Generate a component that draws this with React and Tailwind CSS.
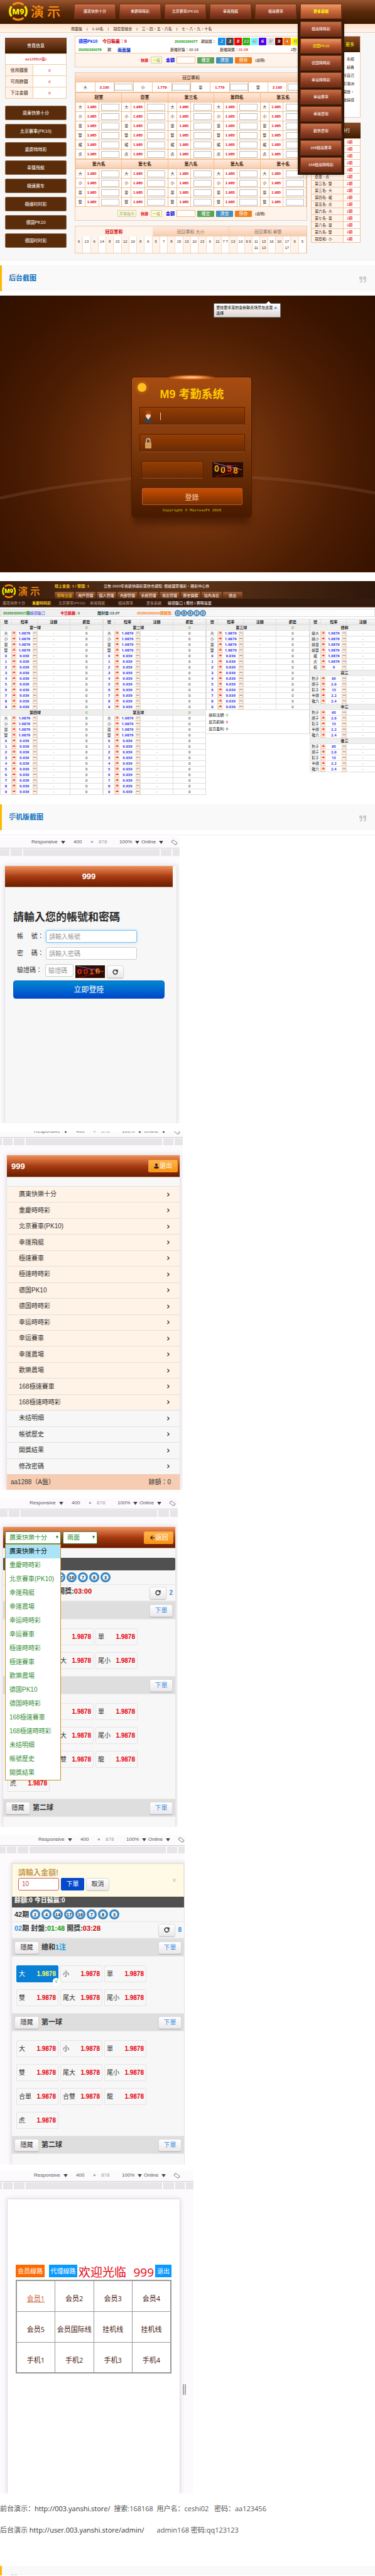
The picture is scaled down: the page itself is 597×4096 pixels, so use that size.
import React from "react";
import { FaQuoteLeft, FaQuoteRight, FaUser, FaArrowLeft, FaChevronRight } from "react-icons/fa";
import { RotateCw } from "lucide-react";

const NAV = ["廣東快樂十分", "重慶時時彩", "北京賽車(PK10)", "幸運飛艇", "極速賽車"];
const MORE = ["極速時時彩", "德国PK10", "德国時時彩", "幸运時時彩", "幸运賽車", "幸運農場", "歡樂農場", "168極速賽車", "168極速時時彩"];
const SIDE = ["廣東快樂十分", "北京賽車(PK10)", "重慶時時彩", "幸運飛艇", "極速赛车", "極速时时彩", "德国PK10", "德国时时彩"];
const CUBES = [
  ["2", "bg-[#0c94f8]"],
  ["3", "bg-[#4a4a4a]"],
  ["8", "bg-[#fb0000]"],
  ["10", "bg-[#22c400]"],
  ["5", "bg-[#7dfbfd]"],
  ["6", "bg-[#5200fb]"],
  ["7", "bg-[#e3dfe5]"],
  ["9", "bg-[#6e0000]"],
  ["4", "bg-[#fe7400]"],
  ["1", "bg-[#fdfd00]"],
];
const STREAKS = [
  ["冠軍 - 小", 3], ["冠軍 - 雙", 3], ["第十名 - 大", 3], ["亞軍 - 大", 2], ["亞軍 - 單", 2],
  ["亞軍 - 虎", 2], ["第三名- 雙", 2], ["第三名- 大", 2], ["第四名- 龍", 2], ["第五名- 虎", 2],
  ["第六名- 大", 2], ["第七名- 單", 2], ["第八名- 單", 2], ["第九名- 雙", 2], ["冠亞和- 小", 2],
];
const RESULTS = [
  "6", "13", "6", "14", "8", "15", "12", "10", "8", "6", "5", "7", "8", "15", "13", "10", "13", "9", "11", "7 7",
  "13", "10", "9 9", "11 11", "13 13", "16", "10", "17 17", "9", "5",
];
const BALL_ROWS = [
  ["大", "1.9879"], ["小", "1.9879"], ["單", "1.9879"], ["雙", "1.9879"],
  ...["0", "1", "2", "3", "4", "5", "6", "7", "8", "9"].map((n) => [n, "9.939"]),
];
const COMBO_ROWS = [["豹子", "65"], ["順子", "2.6"], ["對子", "13"], ["半順", "2.2"], ["雜六", "2.4"]];
const SUM_ROWS = [
  ["總大", "1.9879"], ["總小", "1.9879"], ["總單", "1.9879"], ["總雙", "1.9879"],
  ["龍", "1.9879"], ["虎", "1.9879"], ["和", "9"],
];
const ADMIN_NAV = ["即時注單", "用戶管理", "個人管理", "內部管理", "系統管理", "報表管理", "歷史開獎", "站內消息", "退出"];
const MOBILE_GAMES = [
  "廣東快樂十分", "重慶時時彩", "北京賽車(PK10)", "幸運飛艇", "極速賽車", "極速時時彩", "德国PK10", "德国時時彩",
  "幸运時時彩", "幸运賽車", "幸運農場", "歡樂農場", "168極速賽車", "168極速時時彩",
];
const MOBILE_LINKS = ["未结明细", "帳號歷史", "開獎結果", "修改密碼"];
const SELECT_GAMES = [
  "廣東快樂十分", "重慶時時彩", "北京賽車(PK10)", "幸運飛艇", "幸運農場", "幸运時時彩", "幸运賽車", "極速時時彩", "極速賽車",
  "歡樂農場", "德国PK10", "德国時時彩", "168極速賽車", "168極速時時彩", "未结明细", "帳號歷史", "開獎結果",
];
const SUM_BETS = ["大", "小", "單", "雙", "尾大", "尾小"];
const FIRST_BETS = [...SUM_BETS, "合單", "合雙", "龍", "虎"];

const Logo = ({ className }) => (
  <svg viewBox="0 0 84 30" className={"overflow-visible " + className} role="img" aria-label="M9 演示">
    <g fill="none" strokeWidth="3.4">
      <path d="M6.5 4.8A13 13 0 0 1 23.5 4.8" stroke="#ff8a0a" />
      <path d="M6.5 25.2A13 13 0 0 0 23.5 25.2" stroke="#ff8a0a" />
      <path d="M4.4 7A13 13 0 0 0 4.4 23" stroke="#f7e600" />
      <path d="M25.6 7A13 13 0 0 1 25.6 23" stroke="#f7e600" />
    </g>
    <text x="15" y="19.5" textAnchor="middle" fontSize="13" fontWeight="900" fill="#fff200" fontFamily="Roboto, sans-serif">M9</text>
    <text x="35" y="23" fontSize="21" fontWeight="500" fill="#ff8f0c" fontFamily="'Noto Sans CJK TC', sans-serif">演</text>
    <text x="61" y="23" fontSize="21" fontWeight="500" fill="#ff8f0c" fontFamily="'Noto Sans CJK TC', sans-serif">示</text>
  </svg>
);

const navBtn = "flex h-6 w-full items-center justify-center border border-[#7a3319] bg-linear-to-b text-[6px]";

const BetBar = ({ sound, id }) => (
  <div className="flex h-[21px] items-center gap-[3px] bg-[#fff4ec] pl-[104px]">
    <div className={sound ? "-ml-[37px] flex w-[34px]" : "hidden"}>
      <button className="h-[11px] w-[30px] border border-[#ccc] bg-[#ffffc8] text-[6px] text-[#999]">声音提示</button>
    </div>
    <b className="w-[13px] text-[6px] text-red-600">快捷</b>
    <button className="h-[11px] w-[18px] border border-[#ccc] bg-[#ffffb8] text-[6px] text-[#999]">一般</button>
    <label htmlFor={id} className="ml-[3px] text-[7px] font-bold text-[#0000f0]">金額</label>
    <input id={id} className="h-[11px] w-[30px] border border-[#f3b98a] bg-white text-[6px]" />
    <button className="h-[10px] w-[27px] rounded-[1px] bg-[#5ba55b] text-[7px] text-white">確定</button>
    <button className="h-[10px] w-[27px] rounded-[1px] bg-[#3f8fc0] text-[7px] text-white">清空</button>
    <button className="h-[10px] w-[27px] rounded-[1px] bg-[#f07f1a] text-[7px] text-white">保存</button>
    <span className="ml-[2px] text-[6px]">(说明)</span>
  </div>
);

const OddsCells = ({ name, odds, label }) => (
  <>
    <td className="border border-[#f3c08f] p-0 text-[6px]">{name}</td>
    <td className="border border-[#f3c08f] p-0 text-[6px] font-bold text-red-600">{odds}</td>
    <td className="border border-[#f3c08f] border-r-[#eeb078] p-0">
      <input aria-label={label} className="mx-auto block h-[11px] w-[29px] border border-[#bbb] bg-white text-[6px]" />
    </td>
  </>
);

const PlaceTable = ({ places, rows }) => (
  <table className="w-full table-fixed border-collapse text-center leading-[14px]">
    <colgroup>
      {places.map((p) => (
        <React.Fragment key={p}>
          <col className="w-[4%]" />
          <col className="w-[6%]" />
          <col className="w-[10%]" />
        </React.Fragment>
      ))}
    </colgroup>
    <thead>
      <tr className="h-[15px] bg-linear-to-b from-[#ffe9dd] to-[#f6cbab]">
        {places.map((p) => (
          <th key={p} colSpan={3} className="border border-[#f3c08f] p-0 text-[7px] font-bold">{p}</th>
        ))}
      </tr>
    </thead>
    <tbody>
      {rows.map((r) => (
        <tr key={r} className="h-[15px]">
          {places.map((p) => (
            <OddsCells key={p} name={r} odds="1.985" label={`${p} ${r}`} />
          ))}
        </tr>
      ))}
    </tbody>
  </table>
);

const BettingDesk = () => (
  <section className="h-[415px] bg-[#f7f7f7] text-[6px] text-[#3b1a0a]">
    <header className="flex h-[38px] bg-linear-to-b from-[#97552f] via-[#5a2a0c] to-[#3a1900] pl-[14px]">
      <Logo className="mt-[3px] h-[30px] w-[84px]" />
      <nav className="ml-5 flex gap-[6px] pt-[6px]">
        {NAV.map((n) => (
          <div key={n} className="w-[66px]">
            <button className={navBtn + " from-[#c8704a] via-[#9a4628] to-[#6b2c17] text-white"}>{n}</button>
          </div>
        ))}
        <div className="relative w-[66px]">
          <button className={navBtn + " from-[#f09a68] via-[#c9683c] to-[#a04a26] font-bold text-[#ffff00]"}>更多遊戲</button>
          <div className="absolute -left-[4px] top-[25px] z-10 flex w-[74px] flex-col gap-[3px] bg-[#351a08] px-[4px] pb-[4px] pt-[3px] shadow-md">
            {MORE.map((m, i) => (
              <button
                key={m}
                className={
                  navBtn +
                  (i === 1
                    ? " from-[#f09a68] via-[#b9562e] to-[#7d3218] text-[#ffff00]"
                    : " from-[#c8704a] via-[#9a4628] to-[#6b2c17] text-white")
                }
              >
                {m}
              </button>
            ))}
          </div>
        </div>
      </nav>
    </header>
    <div className="flex h-[14px] items-center gap-[7px] border-b border-[#f3c9a4] bg-linear-to-b from-[#ffe0c8] to-[#fff6ee] pl-[113px] pt-[3px]">
      <a href="#a">兩面盤</a><span>|</span><a href="#b">1-10名</a><span>|</span><a href="#c">冠亞軍組合</a><span>|</span>
      <a href="#d">三、四、五、六名</a><span>|</span><a href="#e">七、八、九、十名</a>
    </div>

    <div className="flex items-start pl-2 pr-[23px]">
      <aside className="mt-2 w-[98px]">
        <h2 className="flex h-[25px] items-center justify-center bg-linear-to-b from-[#8c4c2a] to-[#3d1b02] text-[7px] text-white">會員信息</h2>
        <table className="w-full border-collapse bg-white text-center">
          <tbody>
            <tr className="h-[17px]">
              <td colSpan={2} className="border border-[#f3c9a4] p-0 text-red-600">aa1288(A盤)</td>
            </tr>
            {["信用額度", "可用餘額", "下注金額"].map((t) => (
              <tr key={t} className="h-[18px]">
                <td className="w-[44px] border border-[#f3c9a4] bg-[#fff4ec] p-0 text-[7px]">{t}</td>
                <td className="border border-[#f3c9a4] p-0 text-red-600">0</td>
              </tr>
            ))}
          </tbody>
        </table>
        <div className="mt-[11px] flex flex-col gap-[6px]">
          {SIDE.map((s) => (
            <button key={s} className="h-[23px] rounded-[2px] border border-[#8a6a50] bg-[#5a2c0a] text-[7px] text-white">{s}</button>
          ))}
        </div>
      </aside>

      <main className="ml-[13px] mr-[6px] mt-[5px] min-w-0 flex-1">
        <div className="border border-[#f3c9a4]">
          <div className="h-[27px] overflow-hidden whitespace-nowrap border-b border-[#f3c9a4] bg-white px-[5px]">
            <div className="flex h-[15px] items-center">
              <b className="w-[38px] text-[7px] text-[#0030ff]">德国Pk10</b>
              <b className="w-[115px] text-[7px] text-[#d00000]">今日輸贏：0</b>
              <b className="w-[42px] text-[6px] text-[#00a000]">20200320077</b>
              <span className="w-[27px]">期開獎：</span>
              <div className="flex gap-[1px]">
                {CUBES.map(([n, c]) => (
                  <span key={n} className={"flex h-3 w-3 items-center justify-center rounded-[1px] text-[8px] font-bold italic text-white [text-shadow:0_0_1px_#000,0_0_1px_#000] " + c}>
                    {n}
                  </span>
                ))}
              </div>
            </div>
            <div className="flex h-[12px] items-center">
              <b className="w-[46px] text-[#00a000]">20200320078</b>
              <span className="w-[16px]">期</span>
              <b className="w-[84px] text-[7px] text-[#0030c0]">兩面盤</b>
              <span className="w-[79px]">距離封盤：00:18</span>
              <span>距離開獎：</span>
              <span className="w-[83px] text-red-600">01:08</span>
              <span>2秒</span>
            </div>
          </div>
          <BetBar id="amountTop" />
        </div>

        <div className="mt-2 border border-[#f3c9a4] bg-white">
          <h3 className="flex h-[14px] items-center justify-center bg-linear-to-b from-[#ffe9dd] to-[#f6cbab] text-[7px]">冠亞軍和</h3>
          <table className="w-full table-fixed border-collapse text-center leading-[14px]">
            <tbody>
              <tr className="h-4">
                {[["大", "2.195"], ["小", "1.779"], ["單", "1.779"], ["雙", "2.195"]].map(([n, o]) => (
                  <OddsCells key={n} name={n} odds={o} label={"冠亞軍和 " + n} />
                ))}
              </tr>
            </tbody>
          </table>
          <PlaceTable places={["冠軍", "亞軍", "第三名", "第四名", "第五名"]} rows={["大", "小", "單", "雙", "龍", "虎"]} />
          <PlaceTable places={["第六名", "第七名", "第八名", "第九名", "第十名"]} rows={["大", "小", "單", "雙"]} />
          <BetBar id="amountBottom" sound />
        </div>

        <div className="mt-2 border border-[#f3c9a4] bg-white">
          <div className="grid h-4 grid-cols-3 text-[7px] text-[#8a7468]">
            <button className="bg-[#fff4ec] font-bold text-[#d00000]">冠亞軍和</button>
            <button className="border-r border-[#f3c9a4] bg-linear-to-b from-[#ffe9dd] to-[#f6cbab]">冠亞軍和 大小</button>
            <button className="bg-linear-to-b from-[#ffe9dd] to-[#f6cbab]">冠亞軍和 單雙</button>
          </div>
          <div className="flex h-[26px] text-center leading-[10px]">
            {RESULTS.map((r, i) => (
              <span key={i} className="w-full min-w-0 border-r border-[#f3d9c4] pt-[3px] odd:bg-[#fff4ec]">{r}</span>
            ))}
          </div>
        </div>
      </main>

      <aside className="mt-[5px] w-[79px]">
        <div className="h-[130px] border border-[#f3c9a4] bg-white">
          <h2 className="flex h-[25px] items-center justify-end bg-linear-to-b from-[#8c4c2a] to-[#3d1b02] pr-[9px] text-[7px] text-[#ffff00]">更多</h2>
          <p className="pr-[9px] pt-[5px] text-right leading-[13px]">
            系統<br />請各<br />好自己<br />對澳洲<br />開放，<br />故請諒
          </p>
        </div>
        <h2 className="mt-2 flex h-[25px] items-center justify-end bg-linear-to-b from-[#8c4c2a] to-[#3d1b02] pr-[17px] text-[7px] text-white">兩面長龍排行</h2>
        <table className="w-full border-collapse bg-white leading-[10px]">
          <tbody>
            {STREAKS.map(([name, n]) => (
              <tr key={name} className="h-[11px]">
                <td className="w-[51px] border border-[#f3c08f] bg-[#fff4ec] p-0 pl-[5px]">{name}</td>
                <td className="border border-[#f3c08f] p-0 pl-[5px] text-red-600">{n}期</td>
              </tr>
            ))}
          </tbody>
        </table>
      </aside>
    </div>
  </section>
);

const QuoteBand = ({ title }) => (
  <blockquote className="relative flex h-[41px] items-center border-l-[3px] border-[#ffb800] bg-[#f9f9f9] pl-[11px]">
    <h2 className="text-[11px] font-bold text-[#0b6fc2]">{title}</h2>
    <FaQuoteLeft className="absolute left-[14px] top-[12px] h-[10px] w-[11px] text-[#c4c8cc] opacity-80" />
    <FaQuoteRight className="absolute right-[14px] top-[17px] h-[11px] w-[11px] text-[#c8cbcf]" />
  </blockquote>
);

const Captcha = ({ digits, className }) => (
  <svg viewBox="0 0 49 24" preserveAspectRatio="none" className={className} role="img" aria-label="驗證碼">
    <rect width="49" height="24" fill="#2a0c00" />
    <g fill="#6a5a30">
      <circle cx="4" cy="4" r=".5" /><circle cx="17" cy="3" r=".5" /><circle cx="41" cy="5" r=".5" /><circle cx="46" cy="18" r=".5" />
      <circle cx="6" cy="21" r=".5" /><circle cx="30" cy="20" r=".5" /><circle cx="24" cy="4" r=".5" /><circle cx="37" cy="21" r=".5" />
    </g>
    {digits.map(([d, color, y], i) => (
      <text key={i} x={3 + i * 10} y={y} fontSize="14" fontWeight="bold" fill={color} fontFamily="Liberation Sans, sans-serif">{d}</text>
    ))}
    <path d="M2 1L47 12" stroke="#a890e0" strokeWidth=".8" />
    <path d="M2 10L38 5" stroke="#7a20a0" strokeWidth=".8" />
    <path d="M6 23L42 14" stroke="#d01020" strokeWidth=".8" />
  </svg>
);

const UserIcon = () => (
  <svg viewBox="0 0 14 20" className="h-5 w-[14px]">
    <path d="M1 18Q1 12 7 12T13 18Q12 20 7 20T1 18" fill="#3a4248" />
    <path d="M4.5 12L7 15.5L9.5 12Z" fill="#cfe4f4" />
    <circle cx="7" cy="8.5" r="4" fill="#f8d4b8" />
    <path d="M2.500 9Q1 1 7 1T11.500 9Q10 6 7 6.500T2.500 9" fill="#a8440c" />
  </svg>
);

const LockIcon = () => (
  <svg viewBox="0 0 14 20" className="h-5 w-[14px]">
    <path d="M4 9V6Q4 2.5 7 2.5T10 6V9" fill="none" stroke="#a9b4b8" strokeWidth="1.8" />
    <rect x="2" y="8.5" width="10" height="9.5" rx="1" fill="#dca765" />
    <path d="M2.5 11H11.5M2.5 13.5H11.5M2.5 16H11.5" stroke="#b98038" strokeWidth=".7" />
  </svg>
);

const fieldBox = "border border-[#5a2200] border-b-[#8a5030] bg-linear-to-b from-[#963e04] to-[#6a2a04] text-[9px] text-white";

const AdminLogin = () => (
  <section className="relative h-[440px] overflow-hidden bg-[radial-gradient(ellipse_at_50%_60%,#80400f_0%,#6d300b_30%,#4c1d03_58%,#3a1400_80%,#2f1000_100%)] pl-[12px] pt-[129px]">
    <svg viewBox="0 0 597 60" preserveAspectRatio="none" className="absolute left-0 top-[275px] h-[60px] w-full">
      <path d="M0 47Q298 -19 597 39" fill="none" stroke="#9a6450" strokeOpacity=".25" strokeWidth="5" />
    </svg>
    <div className="absolute left-[57%] top-[12px] flex h-[23px] w-[107px] rounded-[1px] border border-[#5f6f78] bg-linear-to-b from-white to-[#ddd5d2] py-[2px] pl-[3px] text-[6px] leading-[9px] text-black">
      <p className="w-[92px]">更炫更丰富的全新聊天场景在这里选择</p>
      <button aria-label="关闭" className="h-[9px] text-[8px] font-bold leading-[9px] text-[#2a70b8]">×</button>
      <i className="absolute -top-[3px] right-[16px] size-[5px] rotate-45 bg-white" />
    </div>
    <form className="relative mx-auto flex h-[224px] w-[192px] flex-col rounded-[5px] border border-[#4a1c00] bg-linear-to-b from-[#a84c12] via-[#7d380c] to-[#481a00] pl-[12px] pr-[10px] pt-[15px] shadow-[0_14px_10px_-4px_rgba(50,16,0,0.5)]">
      <div className="absolute inset-x-[55px] -top-[4px] h-[8px] rounded-full bg-[radial-gradient(ellipse,#ffe2b0_0%,#ff9040_30%,transparent_70%)]" />
      <div className="absolute left-[9px] top-[9px] size-[14px] rounded-full bg-[#ffc020] shadow-[0_0_6px_#d09010]" />
      <h1 className="h-6 text-center text-[18px] font-bold leading-6 text-[#ffc800]">M9 考勤系统</h1>
      <label className={"mt-2 flex h-[29px] items-center gap-3 rounded-[1px] pl-[6px] " + fieldBox}>
        <UserIcon />
        <i className="h-3 w-px bg-[#e8d0c0]" />
        <input aria-label="帳號" className="w-[100px] bg-transparent outline-none" />
      </label>
      <label className={"mt-[14px] flex h-[29px] items-center gap-3 rounded-[1px] pl-[6px] " + fieldBox}>
        <LockIcon />
        <input type="password" aria-label="密碼" className="w-[100px] bg-transparent outline-none" />
      </label>
      <div className="mt-[14px] flex h-7 items-center justify-between px-[3px]">
        <input aria-label="驗證碼" className={"h-7 w-[99px] rounded-[3px] " + fieldBox} />
        <Captcha className="h-6 w-[49px]" digits={[["0", "#e8b800", 15], ["0", "#f0b000", 17], ["5", "#f05010", 15], ["8", "#f8a808", 18]]} />
      </div>
      <button type="button" className="mx-[4px] mt-[15px] h-[27px] rounded-[2px] border border-[#b85a28] bg-linear-to-b from-[#c84e02] to-[#7a3002] pt-1 text-[11px] text-[#ffcaa0]">登錄</button>
      <p className="mt-[5px] text-center font-['Liberation_Mono',monospace] text-[6px] leading-[8px] text-[#c8c800]">Copyright © Microsoft 2016</p>
    </form>
  </section>
);

const StepBtn = ({ plus }) => (
  <button
    aria-label={plus ? "加" : "減"}
    className={
      "flex h-[7px] w-[7px] items-center justify-center border border-[#fbc9a4] bg-[#fff4e6] text-[8px] font-bold leading-none " +
      (plus ? "text-[#f01010]" : "text-[#2a8ad0]")
    }
  >
    {plus ? "+" : "−"}
  </button>
);

const BallHead = () => (
  <thead>
    <tr className="h-[9px] bg-linear-to-b from-[#f8f8f8] to-[#e6e6e6]">
      <th className="w-[11%] border border-[#ddd] p-0">號</th>
      <th className="w-[25%] border border-[#ddd] p-0">賠率</th>
      <th className="w-[32%] border border-[#ddd] p-0">注額</th>
      <th className="w-[32%] border border-[#ddd] p-0">虧盈</th>
    </tr>
  </thead>
);

const BallGroup = ({ title, rows }) => (
  <tbody>
    <tr className="h-[9px] bg-[#efefee]">
      <th colSpan={3} className="border border-[#e2e2e2] p-0">{title}</th>
      <td className="border border-[#e2e2e2] p-0 text-[#10a010]">0</td>
    </tr>
    {rows.map(([name, odds]) => (
      <tr key={name} className="h-[9px]">
        <td className={"border border-[#ddd] p-0 " + (/\d/.test(name) ? "font-bold text-[#2a2ae0]" : "")}>{name}</td>
        <td className="border border-[#ddd] p-0">
          <div className="flex h-[8px] items-center justify-between">
            <StepBtn plus />
            <b className="font-['Open_Sans',sans-serif] text-[#3a3af0]">{odds}</b>
            <StepBtn />
          </div>
        </td>
        <td className="border border-[#ddd] p-0 text-[#10a010]">-</td>
        <td className="border border-[#ddd] p-0">0</td>
      </tr>
    ))}
  </tbody>
);

const ballTable = "w-full table-fixed border-collapse text-center leading-[8px]";

const RoundBall = ({ n, className }) => (
  <span className={"flex items-center justify-center rounded-full border-[#3a88c4] bg-white font-bold text-[#222] shadow-[inset_0_0_2px_#5aa8e0] " + className}>{n}</span>
);

const AdminPanel = () => (
  <section className="overflow-hidden text-[6px] text-[#222]">
    <header className="h-[42px] border-b border-[#8a7060] bg-linear-to-r from-[#3a1c0c] via-[#5f3418] to-[#2f170a]">
      <div className="flex h-[28px]">
        <Logo className="ml-[3px] mt-[5px] h-[22px] w-[62px]" />
        <div className="ml-[22px] w-[299px] pt-[4px]">
          <div className="flex h-[8px] items-center whitespace-nowrap">
            <b className="w-[78px] text-[#f8c818]">線上會員: 1 / 管理: 1</b>
            <span className="text-white">公告:2020年春節快開彩票休市通知: 根據國家福彩、體彩中心休</span>
          </div>
          <div className="mt-[5px] grid grid-cols-9 gap-[2px]">
            {ADMIN_NAV.map((n, i) => (
              <button key={n} className={"h-[11px] rounded-t-[2px] bg-linear-to-b from-[#a06038] to-[#5a2c10] " + (i ? "text-white" : "text-[#f8c818]")}>{n}</button>
            ))}
          </div>
        </div>
      </div>
      <nav className="flex h-[13px] items-center bg-[#351a0e] pl-1 text-[#b59a80]">
        <a href="#1" className="w-[47px]">廣東快樂十分</a>
        <a href="#2" className="w-[42px] font-bold text-[#f8c818]">重慶時時彩</a>
        <a href="#3" className="w-[50px]">北京賽車(PK10)</a>
        <a href="#4" className="w-[45px]">幸運飛艇</a>
        <a href="#5" className="w-[45px]">極速賽車</a>
        <a href="#6" className="w-[34px]">更多遊戲</a>
        <span className="text-white">總項盤口 | 備份 | 賽時滾單</span>
      </nav>
    </header>
    <div className="mb-[3px] mt-[2px] flex h-[13px] items-center border border-[#e0dde0] bg-linear-to-r from-[#ececec] to-white pl-1 font-bold">
      <span className="w-[91px] text-[#10900f]">20200320017期<span className="font-normal text-[#3a3af0]">總項盤口</span></span>
      <span className="w-[59px] text-red-600">今日輸贏: <span className="text-[#10a010]">0</span></span>
      <span className="w-[63px] text-[#1f4a50]">離封盤:13:27</span>
      <span className="w-[56px] whitespace-nowrap text-[#f88010]">20200320016期開獎:</span>
      <div className="ml-1 flex">
        {["0", "8", "6", "1", "2"].map((n) => (
          <RoundBall key={n} n={n} className="size-[10px] border-2 text-[6px]" />
        ))}
      </div>
    </div>
    <div className="flex items-start">
      <div className="flex w-[55%] shrink-0">
        <table className={ballTable}>
          <BallHead />
          <BallGroup title="第一球" rows={BALL_ROWS} />
          <BallGroup title="第四球" rows={BALL_ROWS} />
        </table>
        <table className={ballTable}>
          <BallHead />
          <BallGroup title="第二球" rows={BALL_ROWS} />
          <BallGroup title="第五球" rows={BALL_ROWS} />
        </table>
      </div>
      <div className="w-[27.5%] shrink-0">
        <table className={ballTable}>
          <BallHead />
          <BallGroup title="第三球" rows={BALL_ROWS} />
        </table>
        <div className="h-[38px] border-b border-r border-[#ddd] pl-1 pt-[3px] leading-[11px]">
          <p>總投注額: <span className="text-[#10a010]">0</span></p>
          <p>最高虧損: <span className="text-red-600">0</span></p>
          <p>最高盈利: 0</p>
        </div>
      </div>
      <div className="w-[27.5%] shrink-0">
        <table className={ballTable}>
          <BallHead />
          <BallGroup title="總和" rows={SUM_ROWS} />
          <BallGroup title="前三" rows={COMBO_ROWS} />
          <BallGroup title="中三" rows={COMBO_ROWS} />
          <BallGroup title="後三" rows={COMBO_ROWS} />
        </table>
      </div>
    </div>
  </section>
);

const Caret = () => (
  <svg viewBox="0 0 8 6" className="ml-[5px] h-[5px] w-[7px] fill-[#444]"><path d="M0 0H8L4 6Z" /></svg>
);

// Device toolbar and ruler along the top of every phone view
const DeviceBar = ({ bar, inset, ruler }) => (
  <div className="shrink-0">
    <div className={"flex items-end overflow-hidden border-b border-[#cfcbd0] " + bar}>
      <div className={"flex h-[18px] shrink-0 items-center text-[8px] text-[#555] " + inset}>
        <span className="flex w-[67px] items-center">Responsive<Caret /></span>
        <span className="w-[27px]">400</span>
        <span className="w-[13px]">×</span>
        <span className="w-[33px] text-[#999]">878</span>
        <span className="flex w-[35px] items-center">100%<Caret /></span>
        <span className="flex w-[47px] items-center">Online<Caret /></span>
        <svg viewBox="0 0 12 10" className="h-[9px] w-[11px]" fill="none" stroke="#888" strokeWidth="1">
          <rect x="1.5" y="2.6" width="9" height="4.8" rx="1.5" transform="rotate(35 6 5)" />
          <path d="M1 5Q1 1 5 1M11 5Q11 9 7 9" />
        </svg>
      </div>
    </div>
    <div className="mt-px flex h-[11px] gap-[2px]">
      {ruler.map((w, i) => (
        <span key={i} className={"shrink-0 bg-[#e6e6e6] " + w} />
      ))}
      <span className="flex-1 bg-[#e6e6e6]" />
    </div>
  </div>
);

const phone = "relative flex flex-col overflow-hidden bg-[#fdfafe] text-[#333]";
const screen = "min-h-0 flex-1 overflow-hidden border border-b-0 border-[#e6e3e8] bg-[#f7f7f7] shadow-[0_0_8px_rgba(0,0,0,0.12)]";
const brandBar = "flex items-center border-b border-[#c8a080] bg-linear-to-b from-[#f09058] via-[#a83c12] via-50% to-[#6a1c02] text-white";
const greyBtn = "flex h-5 items-center justify-center rounded-[3px] border border-[#dcdadc] bg-linear-to-b from-white to-[#ebe8eb] shadow-[0_1px_1px_rgba(0,0,0,0.2)]";
const orangeBtn = "flex h-5 w-[47px] items-center justify-center gap-px rounded-[2px] border border-[#f0a030] bg-linear-to-b from-[#ffb44a] to-[#f99406] text-[10px] text-white";

const LoginPhone = () => (
  <section className={phone + " h-[456px] w-[286px] max-w-full"}>
    <DeviceBar bar="h-[19px]" inset="pl-[50px]" ruler={["w-[15px]", "w-[18px]", "w-[217px]", "w-[17px]"]} />
    <div className={screen + " ml-[7px] mr-[4px] mt-[15px]"}>
      <header className={brandBar + " mr-[6px] h-[34px] justify-center text-[13px] font-bold"}>999</header>
      <form className="pl-[13px]">
        <h2 className="mt-[38px] text-[17px] font-bold leading-5 text-[#2c2c2c]">請輸入您的帳號和密碼</h2>
        <div className="mt-[10px] flex flex-col gap-[7px] pl-[6px] text-[10px]">
          <div className="flex h-5 items-center">
            <label htmlFor="acc" className="w-[46px]">帳　 號：</label>
            <input id="acc" placeholder="請輸入帳號" className="h-5 w-[145px] rounded-[3px] border border-[#7cc0f0] bg-white pl-1 shadow-[0_0_4px_#a8d8ff] placeholder:text-[#999]" />
          </div>
          <div className="flex h-5 items-center">
            <label htmlFor="pwd" className="w-[46px]">密　 碼：</label>
            <input id="pwd" placeholder="請輸入密碼" className="h-5 w-[145px] rounded-[3px] border border-[#ccc] bg-white pl-1 placeholder:text-[#999]" />
          </div>
          <div className="flex h-5 items-center gap-[3px]">
            <label htmlFor="code" className="w-[42px]">驗證碼：</label>
            <input id="code" placeholder="驗證碼" className="h-5 w-[45px] rounded-[3px] border border-[#ccc] bg-white pl-1 placeholder:text-[#999]" />
            <Captcha className="mt-1 h-[20px] w-[47px]" digits={[["0", "#f02808", 17], ["0", "#c83008", 17], ["1", "#e05010", 17], ["6", "#f08a08", 16]]} />
            <button type="button" aria-label="刷新" className={greyBtn + " mt-1 w-[27px]"}><RotateCw size={9} strokeWidth={4} /></button>
          </div>
        </div>
        <button type="button" className="mt-[6px] h-[29px] w-[241px] rounded-[4px] border border-[#0a60c0] bg-linear-to-b from-[#0388d0] to-[#0444cc] text-[12px] text-white">立即登陸</button>
      </form>
    </div>
  </section>
);

const MenuPhone = () => (
  <section className={phone + " h-[570px] w-[291px] max-w-full"}>
    <DeviceBar bar="h-[10px]" inset="pl-[54px]" ruler={["w-[3px]", "w-[15px]", "w-[17px]", "w-[217px]", "w-[16px]"]} />
    <div className={screen + " ml-[10px] mr-[4px] mt-[15px] text-[10px]"}>
      <header className={brandBar + " h-[35px] justify-between pl-[7px] pr-[3px]"}>
        <b className="text-[13px]">999</b>
        <button className={orangeBtn}><FaUser className="h-2 w-2 text-[#222]" />退出</button>
      </header>
      <ul className="mt-[14px] grid h-[458px] auto-rows-fr">
        {[...MOBILE_GAMES, ...MOBILE_LINKS].map((t, i) => (
          <li key={t} className={"border-t border-[#e2e2e0] " + (i < 14 ? "bg-[#fff2e6]" : "bg-[#f7f7f7]")}>
            <a href={"#g" + i} className="flex h-full items-center justify-between pl-[19px] pr-[15px]">
              {t}
              <FaChevronRight className="h-[7px] w-[6px] text-[#222]" />
            </a>
          </li>
        ))}
      </ul>
      <footer className="flex h-[25px] items-center justify-between bg-[#f6cdb2] pl-[6px] pr-[14px]">
        <span>aa1288（A盤）</span>
        <span>餘額：0</span>
      </footer>
    </div>
  </section>
);

const BetCard = ({ name, active }) => (
  <button
    className={
      "relative flex h-[27px] w-[67px] items-center justify-between rounded-[2px] border px-[3px] text-[10px] " +
      (active ? "border-[#0880d8] bg-[#0880d8] text-white" : "border-[#e4e4e4]")
    }
  >
    {name}
    <b className={active ? "text-[#f8f860]" : "text-red-600"}>1.9878</b>
    {active && (
      <span className="absolute -bottom-[6px] -right-[3px] flex h-3 w-[11px] items-center justify-center rounded-full bg-white text-[8px] text-[#109010]">√</span>
    )}
  </button>
);

const BetGroup = ({ title, count, bets, picked }) => (
  <div>
    <div className="flex h-[29px] items-center border-y border-[#e6e6e6] bg-[#dedede] px-1 text-[10px]">
      <button className={greyBtn + " w-[39px]"}>隱藏</button>
      <h3 className="ml-1 flex-1 text-[11px] font-bold">{title}<span className="text-[#0a94d8]">{count}</span></h3>
      <button className={greyBtn + " w-[37px] text-[#3a90e0]"}>下單</button>
    </div>
    <div className="grid grid-cols-[67px_67px_67px] gap-x-[3px] gap-y-[11px] pb-[11px] pl-[7px] pt-[14px]">
      {bets.map((b) => (
        <BetCard key={b} name={b} active={picked === b} />
      ))}
    </div>
  </div>
);

const DrawInfo = ({ open, left }) => (
  <>
    <div className="flex h-[23px] items-center border-b border-[#e8e4ea] pl-1">
      <b className="w-[25px] text-[11px]">42期</b>
      <div className="flex gap-[2px]">
        {["2", "4", "14", "17", "16", "7", "8", "3"].map((n) => (
          <RoundBall key={n} n={n} className="h-[16px] w-[16px] border-[3px] text-[7px]" />
        ))}
      </div>
    </div>
    <div className="flex h-[26px] items-center border-b border-[#e8e4ea] pl-1 pr-1 font-bold">
      <span className="flex-1 pb-1 text-[11px]">
        <span className="text-[#3a90e0]">02</span>期 封盤:<span className="text-[#10a010]">01:48</span> 開獎:<span className="text-[#d00000]">{open}</span>
      </span>
      <button aria-label="刷新" className={greyBtn + " w-[27px]"}><RotateCw size={9} strokeWidth={4} /></button>
      <span className="ml-1 text-[10px] text-[#3a90e0]">{left}</span>
    </div>
  </>
);

const pick = "h-5 appearance-none rounded-[2px] border border-[#3a8a3a] bg-white pl-[6px] text-[10px] text-[#3a903a]";

const SelectPhone = () => (
  <section className={phone + " h-[523px] w-[283px] max-w-full"}>
    <DeviceBar bar="h-[18px]" inset="pl-[47px]" ruler={["w-[12px]", "w-[17px]", "w-[217px]", "w-[17px]"]} />
    <div className={screen + " relative ml-[4px] mr-[3px] mt-[15px]"}>
      <header className={brandBar + " h-[34px] pl-[3px] pr-[3px]"}>
        <div className="relative w-[89px]">
          <select aria-label="遊戲" className={pick + " w-full"}>
            <option>廣東快樂十分</option>
          </select>
          <svg viewBox="0 0 4 5" className="absolute right-[4px] top-[7px] h-[5px] w-1 fill-[#3a8a3a]"><path d="M0 0H4L2 5Z" /></svg>
        </div>
        <div className="relative ml-[3px] w-[55px]">
          <select aria-label="玩法" className={pick + " w-full"}>
            <option>兩面</option>
          </select>
          <svg viewBox="0 0 4 5" className="absolute right-[4px] top-[7px] h-[5px] w-1 fill-[#3a8a3a]"><path d="M0 0H4L2 5Z" /></svg>
        </div>
        <button className={orangeBtn + " ml-auto"}><FaArrowLeft className="h-[8px] w-[9px] text-[#222]" />返回</button>
      </header>
      <ul className="absolute left-[3px] top-[27px] z-10 w-[89px] border border-[#c8902a] bg-white text-[10px] text-[#3a903a]">
        {SELECT_GAMES.map((g, i) => (
          <li key={g} className={"flex h-[22px] items-center pl-[6px] " + (i === 0 ? "bg-[#abe3f7] text-black" : "")}>{g}</li>
        ))}
      </ul>
      <div className="mt-[15px] h-5 rounded-[2px] bg-[#505050]" />
      <DrawInfo open="03:00" left="2" />
      <BetGroup title="總和" bets={SUM_BETS} />
      <BetGroup title="第一球" bets={FIRST_BETS} />
      <BetGroup title="第二球" bets={[]} />
    </div>
  </section>
);

const OrderPhone = () => (
  <section className={phone + " h-[524px] w-[294px] max-w-full"}>
    <DeviceBar bar="h-[17px]" inset="pl-[61px]" ruler={["w-[9px]", "w-[15px]", "w-[17px]", "w-[217px]", "w-[16px]"]} />
    <div className={screen + " ml-[18px] mt-[15px]"}>
      <div className="flex h-[53px] items-center justify-between border border-[#f4e4c4] bg-[#fffae6] pl-[9px] pr-[11px]">
        <div className="pb-[5px]">
          <label htmlFor="stake" className="text-[12px] font-bold leading-[14px] text-[#c49a50]">請輸入金額!</label>
          <div className="mt-px flex gap-[3px] text-[10px]">
            <input id="stake" defaultValue="10" className="h-5 w-[65px] rounded-[3px] border border-[#c86060] bg-white pl-[5px] text-[#c05050]" />
            <button className="h-5 w-[37px] rounded-[2px] bg-[#0448cc] text-white">下單</button>
            <button className={greyBtn + " w-[37px]"}>取消</button>
          </div>
        </div>
        <button aria-label="關閉" className="text-[12px] text-[#c4bfa8]">×</button>
      </div>
      <div className="flex h-[17px] items-start bg-[#505050] pl-1 pt-px text-[10px] font-bold text-white">餘額:0 今日輸赢:0</div>
      <DrawInfo open="03:28" left="8" />
      <BetGroup title="總和" count="1注" bets={SUM_BETS} picked="大" />
      <BetGroup title="第一球" bets={FIRST_BETS} />
      <BetGroup title="第二球" bets={[]} />
    </div>
  </section>
);

const LINES = [
  ["会员1", "会员2", "会员3", "会员4"],
  ["会员5", "会员国际线", "挂机线", "挂机线"],
  ["手机1", "手机2", "手机3", "手机4"],
];

const LinesPhone = () => (
  <section className={phone + " h-[514px] w-[308px] max-w-full"}>
    <DeviceBar bar="h-[18px]" inset="pl-[54px]" ruler={["w-[3px]", "w-[15px]", "w-[17px]", "w-[217px]", "w-[17px]", "w-[15px]"]} />
    <div className="ml-[11px] mr-[21px] mt-[15px] flex-1 border border-b-0 border-[#e0dde2] bg-white px-[13px] pt-[104px] shadow-[0_0_8px_rgba(0,0,0,0.12)]">
      <div className="flex h-5 items-center font-['Open_Sans','Noto_Sans_CJK_SC',sans-serif] text-[10px] text-white">
        <button className="h-5 w-[46px] bg-[#ff6a00]">会员線路</button>
        <button className="ml-[7px] h-5 w-[45px] bg-[#0a9aff]">代理線路</button>
        <p className="flex flex-1 justify-between whitespace-nowrap px-[2px] pt-1 text-[19px] text-red-600"><span>欢迎光临</span><span>999</span></p>
        <button className="h-5 w-[26px] bg-[#0a9aff]">退出</button>
      </div>
      <table className="mt-1 w-full table-fixed border-collapse border-2 border-[#999] text-center font-['Open_Sans','Noto_Sans_CJK_SC',sans-serif] text-[11px] text-[#4a2010]">
        <tbody>
          {LINES.map((row, r) => (
            <tr key={r} className="h-[49px]">
              {row.map((t, c) => (
                <td key={c} className="whitespace-nowrap border border-[#999] p-0 pt-2">
                  <a href="#line" className={r + c === 0 ? "text-[#c86030] underline" : ""}>{t}</a>
                </td>
              ))}
            </tr>
          ))}
        </tbody>
      </table>
    </div>
    <div className="absolute right-[12px] top-[340px] h-[17px] w-[5px] border-x-2 border-[#aaa]" />
  </section>
);

const App = () => (
  <div className="w-full bg-white font-['Liberation_Sans','Noto_Sans_CJK_TC',sans-serif] leading-none">
    <BettingDesk />
    <div className="py-[7px]">
      <QuoteBand title="后台截图" />
    </div>
    <AdminLogin />
    <div className="mb-[15px] mt-[14px]">
      <AdminPanel />
    </div>
    <QuoteBand title="手机版截图" />
    <hr className="mb-[2px] mt-[7px] border-[#eee]" />
    <div className="flex flex-col gap-[13px]">
      <LoginPhone />
      <MenuPhone />
      <SelectPhone />
      <OrderPhone />
    </div>
    <div className="mt-[9px]">
      <LinesPhone />
    </div>
    <div className="flex flex-col gap-[18px] whitespace-pre pb-[49px] pt-4 font-['Open_Sans','Noto_Sans_CJK_SC',sans-serif] text-[11px] leading-4 text-[#555]">
      <p>前台演示：<a href="#front" className="text-[#333]">http://003.yanshi.store/</a>  搜索:168168  用户名：ceshi02   密码：aa123456</p>
      <p>后台演示 <a href="#back" className="text-[#333]">http://user.003.yanshi.store/admin/</a>       admin168 密码:qq123123</p>
    </div>
    <div className="h-[15px] overflow-hidden">
      <QuoteBand title="" />
    </div>
  </div>
);

export default App;
